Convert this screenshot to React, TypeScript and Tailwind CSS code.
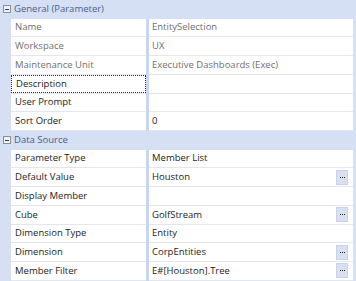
import React from 'react';

type Row =
  | { kind: 'header'; title: string }
  | { kind: 'prop'; label: string; value?: string; muted?: boolean; button?: boolean; focused?: boolean };

const rows: Row[] = [
  { kind: 'header', title: 'General (Parameter)' },
  { kind: 'prop', label: 'Name', value: 'EntitySelection', muted: true },
  { kind: 'prop', label: 'Workspace', value: 'UX', muted: true },
  { kind: 'prop', label: 'Maintenance Unit', value: 'Executive Dashboards (Exec)', muted: true },
  { kind: 'prop', label: 'Description', focused: true },
  { kind: 'prop', label: 'User Prompt' },
  { kind: 'prop', label: 'Sort Order', value: '0' },
  { kind: 'header', title: 'Data Source' },
  { kind: 'prop', label: 'Parameter Type', value: 'Member List' },
  { kind: 'prop', label: 'Default Value', value: 'Houston', button: true },
  { kind: 'prop', label: 'Display Member' },
  { kind: 'prop', label: 'Cube', value: 'GolfStream', button: true },
  { kind: 'prop', label: 'Dimension Type', value: 'Entity' },
  { kind: 'prop', label: 'Dimension', value: 'CorpEntities', button: true },
  { kind: 'prop', label: 'Member Filter', value: 'E#[Houston].Tree', button: true },
];

function CollapseBox() {
  return (
    <div className="w-[8px] h-[8px] border border-[#8a8f99] bg-[#eef2fa] flex items-center justify-center">
      <div className="w-[4px] h-px bg-[#3a3f48]" />
    </div>
  );
}

function EllipsisButton() {
  return (
    <div className="w-[12px] h-[15px] mr-[5px] bg-[#d8e0f2] border border-[#c9d2e8] flex items-center justify-center gap-px">
      <div className="w-px h-px bg-[#2a2a2a]" />
      <div className="w-px h-px bg-[#2a2a2a]" />
      <div className="w-px h-px bg-[#2a2a2a]" />
    </div>
  );
}

export default function App() {
  return (
    <div
      className="w-[356px] h-[281px] bg-[#d5e0f4] flex flex-col overflow-hidden text-[9.5px]"
      style={{ fontFamily: '"Open Sans", "Noto Sans", sans-serif' }}
    >
      {rows.map((row, i) => {
        if (row.kind === 'header') {
          return (
            <div key={i} className="h-[18.73px] flex items-center shrink-0">
              <div className="w-[14px] pl-[3px] flex items-center">
                <CollapseBox />
              </div>
              <span className="text-[#4c5d88]">{row.title}</span>
            </div>
          );
        }
        const textColor = row.muted ? 'text-[#6f6f6f]' : 'text-[#1c1c1c]';
        return (
          <div key={i} className="h-[18.73px] flex shrink-0">
            <div className="w-[11px]" />
            <div className="w-[135px] bg-white border-b border-[#e1e6ef] flex items-center">
              <div
                className={`h-full w-full flex items-center pl-[4px] ${textColor} ${
                  row.focused ? 'border border-dotted border-[#333] pl-[3px]' : ''
                }`}
              >
                {row.label}
              </div>
            </div>
            <div className="w-[3px] bg-[#c9d6ef]" />
            <div className="flex-1 bg-white border-b border-[#e1e6ef] flex items-center justify-between pl-[3px]">
              <span className={textColor}>{row.value ?? ''}</span>
              {row.button && <EllipsisButton />}
            </div>
            <div className="w-[3px]" />
          </div>
        );
      })}
    </div>
  );
}
